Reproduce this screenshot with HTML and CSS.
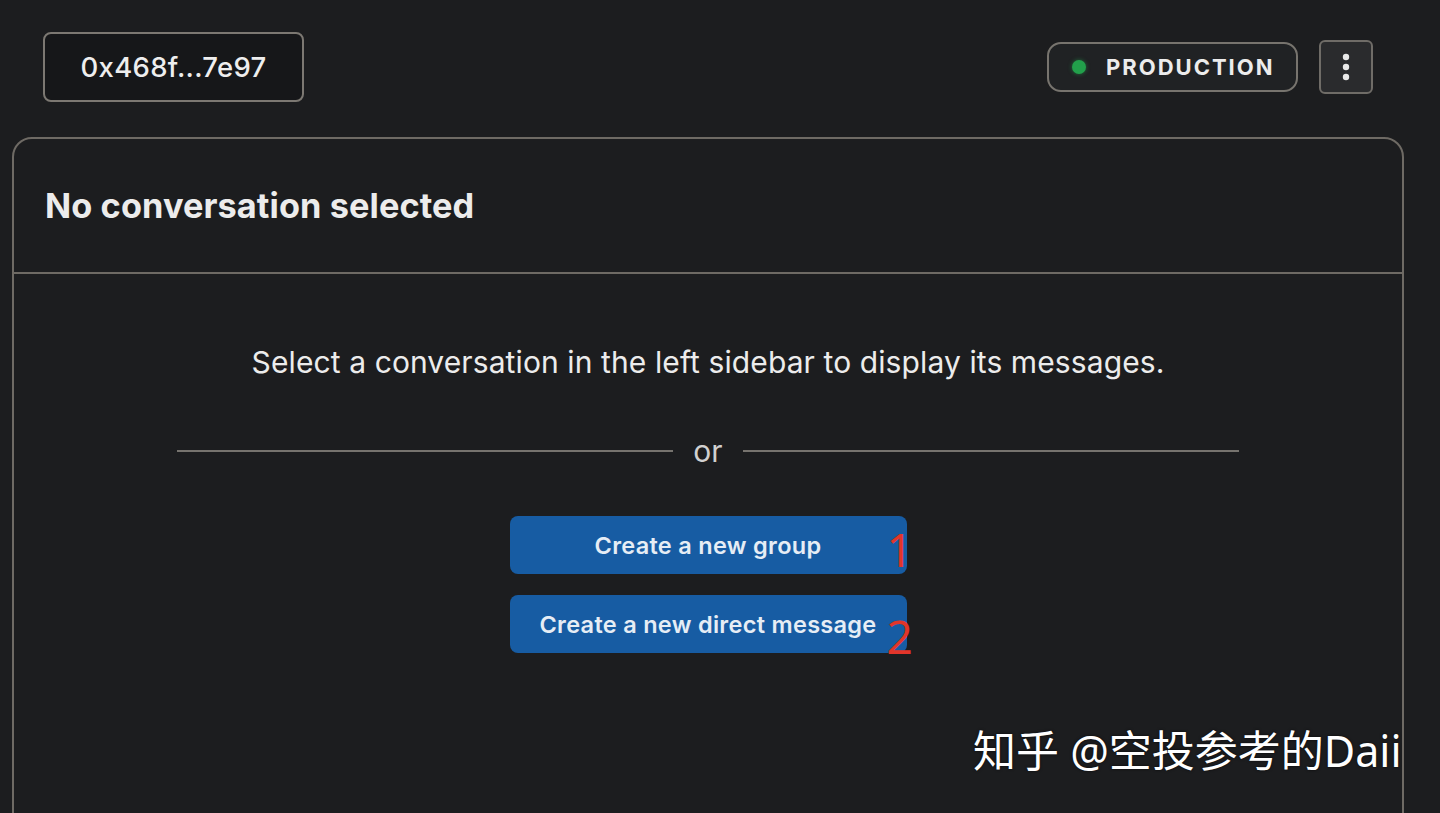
FILE: index.html
```html
<!DOCTYPE html>
<html lang="en">
<head>
<meta charset="utf-8">
<title>Conversations</title>
<link rel="stylesheet" href="styles.css">
</head>
<body>
<div class="page">
  <header class="topbar">
    <button class="address">0x468f...7e97</button>
    <div class="topbar-right">
      <div class="env-pill"><span class="env-dot"></span><span class="env-label">PRODUCTION</span></div>
      <button class="menu-btn" aria-label="Menu">
        <svg width="10" height="30" viewBox="0 0 10 30"><circle cx="5" cy="5" r="3.2" fill="#e9e9e9"/><circle cx="5" cy="15" r="3.2" fill="#e9e9e9"/><circle cx="5" cy="25" r="3.2" fill="#e9e9e9"/></svg>
      </button>
    </div>
  </header>
  <section class="card">
    <div class="card-header"><h1 class="card-title">No conversation selected</h1></div>
    <div class="card-body">
      <p class="hint">Select a conversation in the left sidebar to display its messages.</p>
      <div class="divider"><span class="line"></span><span class="or">or</span><span class="line"></span></div>
      <div class="actions">
        <div class="action-row"><button class="primary">Create a new group</button><span class="mark mark-1">1</span></div>
        <div class="action-row"><button class="primary">Create a new direct message</button><span class="mark mark-2">2</span></div>
      </div>
    </div>
  </section>
  <div class="watermark">知乎 @空投参考的Daii</div>
</div>
</body>
</html>
```
FILE: styles.css
```css
* { box-sizing: border-box; }
html, body { margin: 0; padding: 0; }
body {
  background: #1c1d1f;
  color: #ececec;
  font-family: Inter, "Noto Sans", sans-serif;
  width: 1440px;
  height: 813px;
  overflow: hidden;
}
.page { position: relative; height: 813px; }
.topbar {
  display: flex;
  justify-content: space-between;
  align-items: flex-start;
  padding: 32px 67px 0 43px;
}
.address {
  width: 261px;
  height: 70px;
  background: #161719;
  border: 2px solid #7c7872;
  border-radius: 8px;
  color: #eeeeee;
  font-family: Inter, sans-serif;
  font-size: 27.5px;
  font-weight: 500;
  letter-spacing: 0.3px;
}
.topbar-right { display: flex; align-items: center; gap: 21px; margin-top: 8px; }
.env-pill {
  width: 251px;
  height: 50px;
  border: 2px solid #77746e;
  border-radius: 14px;
  background: #202224;
  display: flex;
  align-items: center;
  padding-left: 23px;
}
.env-dot {
  width: 14px; height: 14px; border-radius: 50%;
  background: #22a04b;
  box-shadow: 0 0 4px rgba(34,160,75,0.6);
}
.env-label {
  margin-left: 20px;
  font-size: 22px;
  font-weight: 700;
  letter-spacing: 2px;
  color: #ececec;
}
.menu-btn {
  width: 54px; height: 54px;
  border: 2px solid #6f6c67;
  border-radius: 6px;
  background: #2a2b2d;
  display: flex; align-items: center; justify-content: center;
  padding: 0;
}
.card {
  margin: 35px 36px 0 12px;
  height: 700px;
  border: 2px solid #6e6a64;
  border-radius: 20px;
  background: #1c1d1f;
}
.card-header {
  height: 135px;
  border-bottom: 2px solid #6e6a64;
  display: flex; align-items: center;
  padding: 0 31px 0 31px;
}
.card-title {
  margin: 0;
  font-size: 34.3px;
  font-weight: 700;
  color: #ececec;
  letter-spacing: 0.1px;
}
.card-body {
  display: flex; flex-direction: column; align-items: center;
  padding-top: 68px;
}
.hint {
  margin: 0;
  font-size: 30px;
  line-height: 40px;
  color: #ececec;
  letter-spacing: 0.1px;
}
.divider {
  margin-top: 51px;
  width: 1062px;
  display: flex; align-items: center; gap: 20px;
}
.line { flex: 1; height: 2px; background: #76736e; }
.or { font-size: 30px; color: #d0d0d0; line-height: 36px; }
.actions { margin-top: 47px; display: flex; flex-direction: column; gap: 21px; }
.action-row { position: relative; }
.primary {
  width: 397px; height: 58px;
  border: none;
  border-radius: 8px;
  background: #175ca3;
  color: #e6edf5;
  font-family: Inter, sans-serif;
  font-size: 23.5px;
  font-weight: 600;
  letter-spacing: 0.3px;
}
.mark {
  position: absolute;
  color: #e2352a;
  font-family: "Noto Sans", sans-serif;
  font-size: 46px;
  line-height: 1;
}
.mark-1 { left: 377px; top: 10px; }
.mark-2 { left: 377px; top: 18px; }
.watermark {
  position: absolute;
  left: 973px; top: 717px;
  font-family: "Noto Sans", "Noto Sans CJK SC", sans-serif;
  font-size: 43px;
  color: #ffffff;
  text-shadow: 0 0 3px rgba(0,0,0,0.7);
  white-space: nowrap;
}
```
